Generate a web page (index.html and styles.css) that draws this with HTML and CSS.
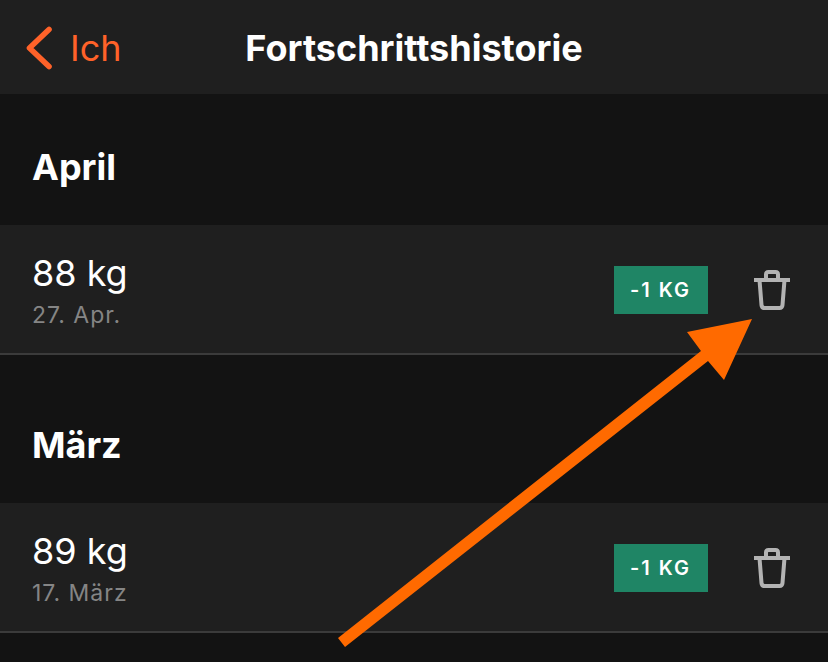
FILE: index.html
```html
<!DOCTYPE html>
<html lang="de">
<head>
<meta charset="utf-8">
<meta name="viewport" content="width=device-width, initial-scale=1">
<title>Fortschrittshistorie</title>
<link rel="stylesheet" href="styles.css">
</head>
<body>
<svg class="symbols" aria-hidden="true">
  <symbol id="trash" viewBox="0 0 36 40">
    <path d="M0 10H36M12 10V4.500Q12 2 14.500 2H21.500Q24 2 24 4.500V10M5.500 10L7.500 35Q7.800 38 10.500 38H25.500Q28.200 38 28.500 35L30.500 10" fill="none" stroke="currentColor" stroke-width="4"/>
  </symbol>
</svg>
<header class="bar">
  <a class="back" href="#">
    <svg class="chevron" viewBox="0 0 26 44" aria-hidden="true"><path d="M23 3.500L3.500 22L23 40.500"/></svg>
    <span>Ich</span>
  </a>
  <h1 class="title">Fortschrittshistorie</h1>
</header>
<main>
  <section>
    <h2 class="month">April</h2>
    <div class="entry">
      <div class="info">
        <div class="weight">88 kg</div>
        <div class="date">27. Apr.</div>
      </div>
      <span class="badge">-1 KG</span>
      <button class="delete" type="button" aria-label="Löschen"><svg class="trash"><use href="#trash"/></svg></button>
    </div>
  </section>
  <section>
    <h2 class="month later">März</h2>
    <div class="entry">
      <div class="info">
        <div class="weight">89 kg</div>
        <div class="date">17. März</div>
      </div>
      <span class="badge">-1 KG</span>
      <button class="delete" type="button" aria-label="Löschen"><svg class="trash"><use href="#trash"/></svg></button>
    </div>
  </section>
</main>
<svg class="pointer" viewBox="0 0 414 328" aria-hidden="true"><path d="M414 0L349 13L363 32L0 319L7 328L370 42L386 61Z"/></svg>
</body>
</html>
```
FILE: styles.css
```css
* {
  box-sizing: border-box;
}

body {
  position: relative;
  margin: 0;
  min-height: 100vh;
  background: #131313;
  color: #fff;
  font-family: Inter, "Liberation Sans", sans-serif;
}

h1,
h2 {
  margin: 0;
  font-size: 36px;
  font-weight: 700;
  line-height: 44px;
}

.symbols {
  display: none;
}

.bar {
  display: grid;
  grid-template-columns: 1fr auto 1fr;
  align-items: center;
  height: 94px;
  padding: 2px 26px 0;
  background: #1f1f1f;
}

.back {
  display: flex;
  align-items: center;
  gap: 18px;
  color: #ff6229;
  font-size: 36px;
  line-height: 44px;
  text-decoration: none;
}

.chevron {
  width: 26px;
  height: 44px;
  fill: none;
  stroke: currentColor;
  stroke-width: 5.6;
  stroke-linecap: round;
  stroke-linejoin: round;
}

.month {
  padding: 51px 32px 36px;
}

.later {
  padding-top: 68px;
}

.entry {
  display: flex;
  align-items: center;
  height: 130px;
  padding: 2px 38px 0 32px;
  border-bottom: 2px solid #3b3b3b;
  background: #1f1f1f;
}

.info {
  flex: 1;
  padding-top: 6px;
}

.weight {
  font-size: 36px;
  line-height: 44px;
}

.date {
  color: #858585;
  font-size: 23px;
  line-height: 40px;
  letter-spacing: 1px;
}

.badge {
  min-width: 94px;
  padding: 0 16px;
  background: #1f8565;
  font-size: 20px;
  font-weight: 600;
  line-height: 48px;
  letter-spacing: 2px;
}

.delete {
  display: flex;
  margin-left: 46px;
  padding: 0;
  border: 0;
  background: none;
  color: #b3b3b3;
}

.trash {
  width: 36px;
  height: 40px;
}

.pointer {
  position: absolute;
  top: 319px;
  left: 338px;
  width: 414px;
  height: 328px;
  fill: #ff6a00;
}
```
